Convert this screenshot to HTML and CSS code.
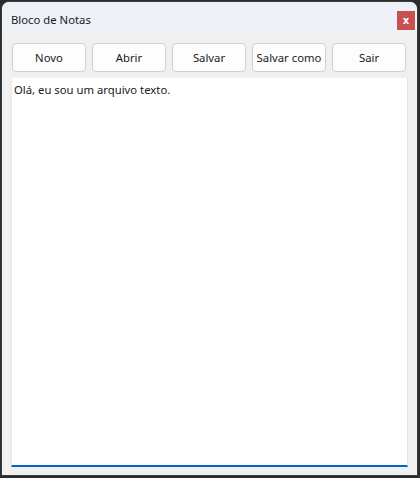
FILE: index.html
```html
<!DOCTYPE html>
<html lang="pt">
<head>
<meta charset="utf-8">
<title>Bloco de Notas</title>
<link rel="stylesheet" href="styles.css">
</head>
<body>
<div class="window">
  <div class="titlebar">
    <span class="title">Bloco de Notas</span>
    <button class="close" aria-label="Fechar">x</button>
  </div>
  <div class="content">
    <div class="toolbar">
      <button class="btn">Novo</button>
      <button class="btn">Abrir</button>
      <button class="btn">Salvar</button>
      <button class="btn">Salvar como</button>
      <button class="btn">Sair</button>
    </div>
    <textarea class="editor" spellcheck="false">Olá, eu sou um arquivo texto.</textarea>
  </div>
</div>
</body>
</html>
```
FILE: styles.css
```css
html, body {
  margin: 0;
  padding: 0;
  background: #2b2b2b;
  width: 420px;
  height: 478px;
  overflow: hidden;
}
body {
  padding: 2px 0 0 2px;
  box-sizing: border-box;
  font-family: "Noto Sans", "Open Sans", sans-serif;
  font-size: 11.3px;
  color: #1a1a1a;
}
.window {
  width: 415px;
  height: 473px;
  background: #f0f0f0;
  border-radius: 7px 7px 0 0;
  overflow: hidden;
  display: flex;
  flex-direction: column;
  box-shadow: 0 0 0 1px #3c3c3c;
}
.titlebar {
  height: 32px;
  background: #eef1f8;
  display: flex;
  align-items: flex-start;
  justify-content: space-between;
  padding-left: 9px;
  flex: none;
}
.title {
  margin-top: 10px;
  font-size: 11.3px;
  color: #1a1a1a;
}
.close {
  margin-top: 9px;
  margin-right: 2px;
  width: 18px;
  height: 19px;
  border: none;
  padding: 0;
  background: #c75050;
  color: #ffffff;
  font-family: "DejaVu Sans", sans-serif;
  font-weight: bold;
  font-size: 10px;
  line-height: 18px;
}
.content {
  flex: 1;
  display: flex;
  flex-direction: column;
  padding: 9px 10px 8px 10px;
  gap: 6px;
}
.toolbar {
  display: grid;
  grid-template-columns: repeat(5, 74px);
  gap: 6px;
}
.btn {
  height: 29px;
  background: #fdfdfd;
  border: 1px solid #d0d0d0;
  border-radius: 4px;
  font-family: "Noto Sans", "Open Sans", sans-serif;
  font-size: 11.3px;
  color: #1a1a1a;
  padding: 0;
  white-space: nowrap;
}
.editor {
  flex: 1;
  margin: 0 0 0 -1px;
  width: 397px;
  box-sizing: border-box;
  resize: none;
  background: #ffffff;
  border: none;
  border-left: 1px solid #ebebeb;
  border-right: 1px solid #dde3ea;
  border-bottom: 2px solid #0067c0;
  padding: 4px 2px;
  font-family: "Noto Sans", "Open Sans", sans-serif;
  font-size: 11.3px;
  line-height: 16px;
  color: #1a1a1a;
  outline: none;
}
```
